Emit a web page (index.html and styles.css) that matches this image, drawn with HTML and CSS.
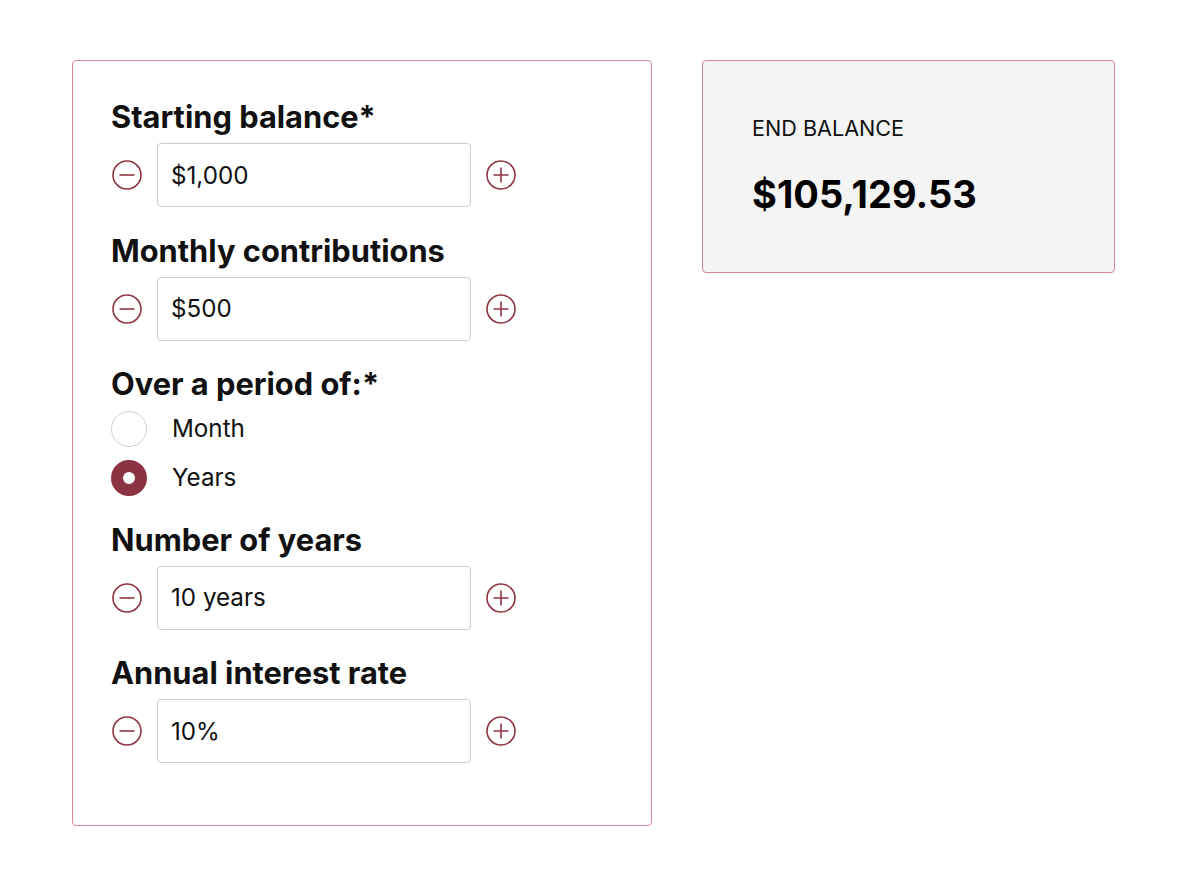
FILE: index.html
```html
<!DOCTYPE html>
<html lang="en">
<head>
<meta charset="utf-8">
<title>Savings calculator</title>
<link rel="stylesheet" href="styles.css">
</head>
<body>
<main class="page">
  <section class="form-card">
    <div class="field">
      <label class="field-label">Starting balance*</label>
      <div class="stepper">
        <button class="step" aria-label="Decrease"><svg viewBox="0 0 32 32" width="32" height="32"><circle cx="16" cy="16" r="14" fill="none" stroke="#8e3442" stroke-width="1.6"/><path d="M8.5 16h15" stroke="#8e3442" stroke-width="1.6"/></svg></button>
        <input class="value" type="text" value="$1,000">
        <button class="step" aria-label="Increase"><svg viewBox="0 0 32 32" width="32" height="32"><circle cx="16" cy="16" r="14" fill="none" stroke="#8e3442" stroke-width="1.6"/><path d="M8.5 16h15M16 8.5v15" stroke="#8e3442" stroke-width="1.6"/></svg></button>
      </div>
    </div>
    <div class="field">
      <label class="field-label">Monthly contributions</label>
      <div class="stepper">
        <button class="step" aria-label="Decrease"><svg viewBox="0 0 32 32" width="32" height="32"><circle cx="16" cy="16" r="14" fill="none" stroke="#8e3442" stroke-width="1.6"/><path d="M8.5 16h15" stroke="#8e3442" stroke-width="1.6"/></svg></button>
        <input class="value" type="text" value="$500">
        <button class="step" aria-label="Increase"><svg viewBox="0 0 32 32" width="32" height="32"><circle cx="16" cy="16" r="14" fill="none" stroke="#8e3442" stroke-width="1.6"/><path d="M8.5 16h15M16 8.5v15" stroke="#8e3442" stroke-width="1.6"/></svg></button>
      </div>
    </div>
    <div class="field radio-field">
      <label class="field-label">Over a period of:*</label>
      <div class="radios">
        <label class="radio"><span class="dot"></span><span>Month</span></label>
        <label class="radio checked"><span class="dot"></span><span>Years</span></label>
      </div>
    </div>
    <div class="field">
      <label class="field-label">Number of years</label>
      <div class="stepper">
        <button class="step" aria-label="Decrease"><svg viewBox="0 0 32 32" width="32" height="32"><circle cx="16" cy="16" r="14" fill="none" stroke="#8e3442" stroke-width="1.6"/><path d="M8.5 16h15" stroke="#8e3442" stroke-width="1.6"/></svg></button>
        <input class="value" type="text" value="10 years">
        <button class="step" aria-label="Increase"><svg viewBox="0 0 32 32" width="32" height="32"><circle cx="16" cy="16" r="14" fill="none" stroke="#8e3442" stroke-width="1.6"/><path d="M8.5 16h15M16 8.5v15" stroke="#8e3442" stroke-width="1.6"/></svg></button>
      </div>
    </div>
    <div class="field">
      <label class="field-label">Annual interest rate</label>
      <div class="stepper">
        <button class="step" aria-label="Decrease"><svg viewBox="0 0 32 32" width="32" height="32"><circle cx="16" cy="16" r="14" fill="none" stroke="#8e3442" stroke-width="1.6"/><path d="M8.5 16h15" stroke="#8e3442" stroke-width="1.6"/></svg></button>
        <input class="value" type="text" value="10%">
        <button class="step" aria-label="Increase"><svg viewBox="0 0 32 32" width="32" height="32"><circle cx="16" cy="16" r="14" fill="none" stroke="#8e3442" stroke-width="1.6"/><path d="M8.5 16h15M16 8.5v15" stroke="#8e3442" stroke-width="1.6"/></svg></button>
      </div>
    </div>
  </section>
  <aside class="result-card">
    <div class="result-label">END BALANCE</div>
    <div class="result-value">$105,129.53</div>
  </aside>
</main>
</body>
</html>
```
FILE: styles.css
```css
* { box-sizing: border-box; }
html, body { margin: 0; padding: 0; background: #fff; }
body {
  font-family: Inter, "Noto Sans", "Liberation Sans", sans-serif;
  color: #111;
}
.page {
  display: flex;
  align-items: flex-start;
  gap: 50px;
  padding: 60px 0 0 72px;
}
.form-card {
  width: 580px;
  border: 1px solid #db8791;
  border-radius: 4px;
  padding: 39px 38px 62px 38px;
  display: flex;
  flex-direction: column;
  gap: 26.5px;
}
.field { display: flex; flex-direction: column; gap: 9px; }
.field-label {
  font-size: 30.8px;
  font-weight: 700;
  line-height: 34px;
  color: #111;
}
.stepper {
  display: flex;
  align-items: center;
  gap: 14px;
}
.step {
  width: 32px;
  height: 32px;
  padding: 0;
  margin: 0;
  border: 0;
  background: none;
  display: flex;
}
.value {
  width: 314px;
  height: 64px;
  border: 1px solid #cccccc;
  border-radius: 4px;
  padding: 0 13px;
  font-family: Inter, "Noto Sans", "Liberation Sans", sans-serif;
  font-size: 24.2px;
  color: #111;
  background: #fff;
  outline: none;
}
.radio-field { gap: 10px; }
.radios { display: flex; flex-direction: column; gap: 13px; }
.radio {
  display: flex;
  align-items: center;
  gap: 25px;
  font-size: 24.2px;
  line-height: 36px;
  color: #111;
}
.dot {
  width: 36px;
  height: 36px;
  border-radius: 50%;
  border: 1.5px solid #cfcfcf;
  background: #fff;
  flex: none;
}
.radio.checked .dot {
  border: 12px solid #8c3343;
  background: #fff;
}
.result-card {
  width: 413px;
  height: 213px;
  background: #f4f4f4;
  border: 1px solid #db8791;
  border-radius: 4px;
  padding: 54px 49px 0 49px;
}
.result-label {
  font-size: 21.6px;
  line-height: 26px;
  color: #111;
}
.result-value {
  margin-top: 31px;
  font-size: 38px;
  font-weight: 700;
  line-height: 44px;
  color: #000;
}
```
